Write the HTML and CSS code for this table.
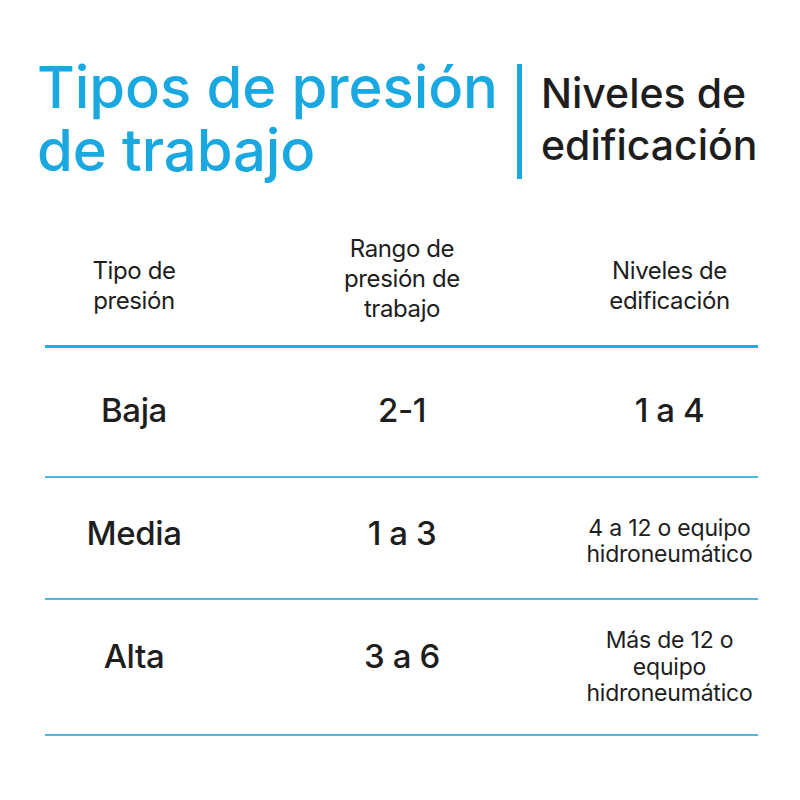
FILE: index.html
```html
<!DOCTYPE html>
<html lang="es">
<head>
<meta charset="utf-8">
<title>Tipos de presión de trabajo</title>
<link rel="stylesheet" href="styles.css">
</head>
<body>
<div class="page">
  <header class="heading">
    <h1 class="title">Tipos de presión<br>de trabajo</h1>
    <div class="divider"></div>
    <h2 class="subtitle">Niveles de<br>edificación</h2>
  </header>
  <div class="table">
    <div class="row head">
      <div class="cell c1 low">Tipo de<br>presión</div>
      <div class="cell c2">Rango de<br>presión de<br>trabajo</div>
      <div class="cell c3 low">Niveles de<br>edificación</div>
    </div>
    <div class="row r1">
      <div class="cell c1 big">Baja</div>
      <div class="cell c2 big">2-1</div>
      <div class="cell c3 big">1 a 4</div>
    </div>
    <div class="row r2">
      <div class="cell c1 big">Media</div>
      <div class="cell c2 big">1 a 3</div>
      <div class="cell c3 small">4 a 12 o equipo<br>hidroneumático</div>
    </div>
    <div class="row r3">
      <div class="cell c1 big">Alta</div>
      <div class="cell c2 big">3 a 6</div>
      <div class="cell c3 small">Más de 12 o<br>equipo<br>hidroneumático</div>
    </div>
  </div>
</div>
</body>
</html>
```

FILE: styles.css
```css
* { box-sizing: border-box; }
html, body { margin: 0; padding: 0; background: #ffffff; }
body { font-family: Inter, "Noto Sans", sans-serif; color: #1e1e1e; }
.page { width: 800px; height: 800px; }

.heading {
  display: flex;
  align-items: flex-start;
  padding: 56px 0 0 37px;
  height: 210px;
}
.title {
  margin: 0;
  width: 480px;
  white-space: nowrap;
  font-size: 58px;
  line-height: 63px;
  font-weight: 500;
  color: #1aa8e0;
  letter-spacing: -0.1px;
}
.divider {
  width: 5px;
  height: 115px;
  margin-top: 8px;
  background: #1aa8e0;
}
.subtitle {
  margin: 11px 0 0 19px;
  white-space: nowrap;
  font-size: 41px;
  line-height: 52px;
  font-weight: 500;
  color: #1e1e1e;
}

.table { margin-left: 45px; width: 713px; }
.row {
  display: grid;
  grid-template-columns: 178px 358px 177px;
  align-items: center;
}
.cell { text-align: center; }
.head { height: 138px; border-bottom: 3px solid #1fb0dc; padding-top: 6px; padding-bottom: 4px; }
.head .cell { font-size: 24px; line-height: 30px; letter-spacing: -0.4px; }
.head .low { margin-top: 14px; }
.r1 { height: 130px; border-bottom: 2px solid #4ab9df; }
.r1 .big { margin-bottom: 4px; }
.r2 { height: 122px; border-bottom: 2px solid #4ab9df; }
.r2 .big { margin-bottom: 10px; }
.r2 .small { margin-top: 6px; }
.r3 { height: 136px; border-bottom: 2px solid #4ab9df; }
.r3 .big { margin-bottom: 22px; }
.big { font-size: 33px; line-height: 38px; font-weight: 500; letter-spacing: -0.4px; }
.small { font-size: 23px; line-height: 26.5px; letter-spacing: -0.2px; }
```
